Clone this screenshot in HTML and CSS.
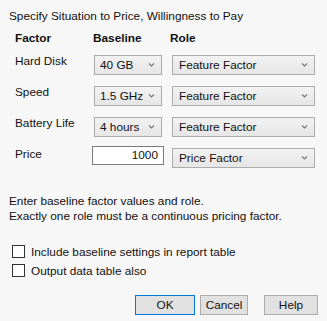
FILE: index.html
```html
<!DOCTYPE html>
<html>
<head>
<meta charset="utf-8">
<link rel="stylesheet" href="styles.css">
</head>
<body>
<div class="dlg">
  <div class="title">Specify Situation to Price, Willingness to Pay</div>
  <div class="grid">
    <div class="hdr">Factor</div>
    <div class="hdr hdr-base">Baseline</div>
    <div class="hdr hdr-role">Role</div>

    <div class="lbl">Hard Disk</div>
    <div class="sel"><span>40 GB</span><svg class="arr" width="7" height="4" viewBox="0 0 7 4"><path d="M1 0.5 L3.5 3 L6 0.5" fill="none" stroke="#7a7a7a" stroke-width="1.2"/></svg></div>
    <div class="sel role"><span>Feature Factor</span><svg class="arr" width="7" height="4" viewBox="0 0 7 4"><path d="M1 0.5 L3.5 3 L6 0.5" fill="none" stroke="#7a7a7a" stroke-width="1.2"/></svg></div>

    <div class="lbl">Speed</div>
    <div class="sel"><span>1.5 GHz</span><svg class="arr" width="7" height="4" viewBox="0 0 7 4"><path d="M1 0.5 L3.5 3 L6 0.5" fill="none" stroke="#7a7a7a" stroke-width="1.2"/></svg></div>
    <div class="sel role"><span>Feature Factor</span><svg class="arr" width="7" height="4" viewBox="0 0 7 4"><path d="M1 0.5 L3.5 3 L6 0.5" fill="none" stroke="#7a7a7a" stroke-width="1.2"/></svg></div>

    <div class="lbl">Battery Life</div>
    <div class="sel"><span>4 hours</span><svg class="arr" width="7" height="4" viewBox="0 0 7 4"><path d="M1 0.5 L3.5 3 L6 0.5" fill="none" stroke="#7a7a7a" stroke-width="1.2"/></svg></div>
    <div class="sel role"><span>Feature Factor</span><svg class="arr" width="7" height="4" viewBox="0 0 7 4"><path d="M1 0.5 L3.5 3 L6 0.5" fill="none" stroke="#7a7a7a" stroke-width="1.2"/></svg></div>

    <div class="lbl">Price</div>
    <div class="inp">1000</div>
    <div class="sel role"><span>Price Factor</span><svg class="arr" width="7" height="4" viewBox="0 0 7 4"><path d="M1 0.5 L3.5 3 L6 0.5" fill="none" stroke="#7a7a7a" stroke-width="1.2"/></svg></div>
  </div>

  <div class="note">Enter baseline factor values and role.<br>Exactly one role must be a continuous pricing factor.</div>

  <div class="checks">
    <div class="chk"><span class="box"></span><span>Include baseline settings in report table</span></div>
    <div class="chk"><span class="box"></span><span>Output data table also</span></div>
  </div>

  <div class="btns">
    <div class="btn ok">OK</div>
    <div class="btn cancel">Cancel</div>
    <div class="btn help">Help</div>
  </div>
</div>
</body>
</html>
```

FILE: styles.css
```css
html, body {
  margin: 0;
  padding: 0;
  background: #f7f7f7;
}
body {
  width: 327px;
  height: 321px;
  overflow: hidden;
  font-family: "Liberation Sans", Arial, sans-serif;
  font-size: 11.8px;
  color: #111;
}
.dlg {
  padding: 8px 0 0 9px;
}
.title {
  line-height: 16px;
  height: 16px;
}
.grid {
  display: grid;
  grid-template-columns: 69px 68px 143px;
  grid-template-rows: 14px repeat(4, 20px);
  column-gap: 10px;
  row-gap: 11px;
  margin: 6px 0 0 6px;
}
.hdr {
  font-weight: bold;
  line-height: 14px;
  margin-top: 1px;
}
.hdr-base { margin-left: -1px; }
.hdr-role { margin-left: -2px; }
.lbl {
  line-height: 14px;
  margin-top: -1px;
}
.sel {
  box-sizing: border-box;
  height: 20px;
  border: 1px solid #acacac;
  background: linear-gradient(#f2f2f2, #e6e6e6);
  display: flex;
  align-items: center;
  justify-content: space-between;
  padding: 0 6px 0 5px;
  line-height: 18px;
}
.sel.role {
  padding-left: 6px;
}
.arr {
  flex: none;
}
.inp {
  box-sizing: border-box;
  height: 19px;
  width: 72px;
  margin: -2px 0 0 -2px;
  border: 1px solid #7a7a7a;
  background: #fff;
  text-align: right;
  padding-right: 5px;
  line-height: 17px;
}
.note {
  margin-top: 26px;
  line-height: 15px;
}
.checks {
  margin: 18px 0 0 3px;
  display: flex;
  flex-direction: column;
}
.chk {
  height: 19px;
  display: flex;
  align-items: center;
  gap: 6px;
}
.box {
  box-sizing: border-box;
  width: 13px;
  height: 13px;
  border: 1px solid #333;
  background: #fff;
  flex: none;
}
.btns {
  display: flex;
  margin: 15px 0 0 126px;
}
.btn {
  box-sizing: border-box;
  height: 20px;
  border: 1px solid #adadad;
  background: #e1e1e1;
  display: flex;
  align-items: center;
  justify-content: center;
  line-height: 18px;
}
.ok {
  width: 60px;
  border-color: #0078d7;
}
.cancel {
  width: 48px;
  margin-left: 5px;
}
.help {
  width: 54px;
  margin-left: 16px;
}
```
